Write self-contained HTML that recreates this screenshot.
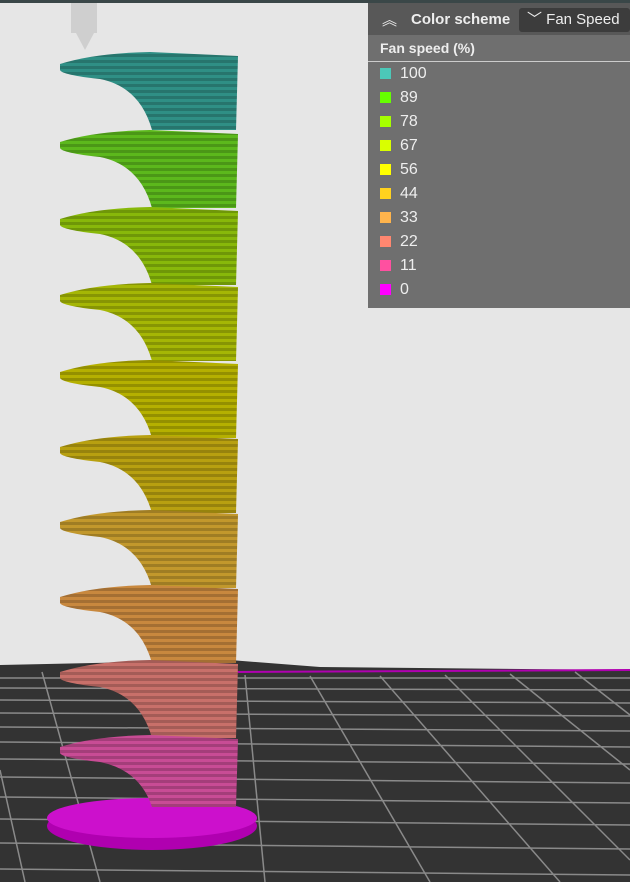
<!DOCTYPE html>
<html><head><style>
body{margin:0;width:630px;height:882px;overflow:hidden;background:#e6e6e6;font-family:"Liberation Sans",sans-serif}
#p{position:absolute;left:368px;top:3px;width:262px;height:305px;background:#6f6f6f;color:#eee}
.h{height:32px;background:#585858;position:relative}
.it{position:absolute;left:12px;font-size:16px;color:#eee}
.sw{display:inline-block;width:11px;height:11px;margin-right:9px;vertical-align:-1px}
</style></head><body>
<svg width="630" height="882" style="position:absolute;left:0;top:0">
<defs>
<pattern id="st" width="4" height="6" patternUnits="userSpaceOnUse"><rect width="4" height="3" fill="rgba(0,0,0,0.18)"/></pattern>
</defs>
<rect x="0" y="0" width="630" height="3" fill="#3a4748"/>
<path d="M0,665 L230,660 L320,667 L630,670 L630,882 L0,882Z" fill="#333"/>
<line x1="230" y1="672" x2="630" y2="670" stroke="#b000b0" stroke-width="2"/>
<g stroke="#8a8a8a" stroke-width="1.5" fill="none">
<line x1="0" y1="678" x2="630" y2="678"/><line x1="0" y1="688" x2="630" y2="690"/>
<line x1="0" y1="700" x2="630" y2="703"/><line x1="0" y1="713" x2="630" y2="716"/>
<line x1="0" y1="727" x2="630" y2="731"/><line x1="0" y1="742" x2="630" y2="747"/>
<line x1="0" y1="759" x2="630" y2="764"/><line x1="0" y1="777" x2="630" y2="783"/>
<line x1="0" y1="797" x2="630" y2="803"/><line x1="0" y1="819" x2="630" y2="825"/>
<line x1="0" y1="843" x2="630" y2="849"/><line x1="0" y1="869" x2="630" y2="875"/>
<line x1="42" y1="672" x2="100" y2="882"/><line x1="0" y1="770" x2="25" y2="882"/>
<line x1="245" y1="675" x2="265" y2="882"/><line x1="310" y1="676" x2="430" y2="882"/>
<line x1="380" y1="676" x2="560" y2="882"/><line x1="445" y1="675" x2="630" y2="860"/>
<line x1="510" y1="674" x2="630" y2="770"/><line x1="575" y1="672" x2="630" y2="715"/>
</g>
<g fill="#cfcfcf"><rect x="71" y="3" width="26" height="30"/><polygon points="76,33 94,33 85,50"/></g>
<ellipse cx="152" cy="826" rx="105" ry="24" fill="#b000b0"/>
<ellipse cx="152" cy="818" rx="105" ry="20" fill="#cc10cc"/>
<g id="tower"></g>
</svg>
<script>
var cols=["#2f8f85","#5cb81c","#88b80a","#a5b605","#b5b000","#b8a010","#c2982c","#c8883e","#c8706a","#c84c95"];
var tops=[52,130,207,283,360,435,510,585,660,735];
var g=document.getElementById("tower"),s="";
for(var i=0;i<10;i++){var y=tops[i],h=(i==9?72:78),c=cols[i];
var d="M60,"+(y+12)+" Q95,"+(y+1)+" 150,"+y+" L238,"+(y+4)+" L236,"+(y+h)+" L152,"+(y+h)+" Q140,"+(y+35)+" 100,"+(y+27)+" Q62,"+(y+23)+" 60,"+(y+18)+"Z";
s+='<path d="'+d+'" fill="'+c+'"/><path d="'+d+'" fill="url(#st)"/>';}
g.innerHTML=s;
</script>
<div id="p">
<div class="h"><span style="position:absolute;left:14px;top:6px;font-size:15px">︽</span>
<b style="position:absolute;left:43px;top:8px;font-size:15px">Color scheme</b>
<div style="position:absolute;left:151px;top:5px;width:111px;height:24px;background:#3c3c3c;border-radius:3px;font-size:15px;line-height:24px;padding-left:8px;box-sizing:border-box">﹀ Fan Speed</div></div>
<b style="position:absolute;left:12px;top:37px;font-size:14px">Fan speed (%)</b>
<div style="position:absolute;left:0;top:58px;width:262px;height:1px;background:#ccc"></div>
<div class="it" style="top:62px"><span class="sw" style="background:#4cc8b8"></span>100</div>
<div class="it" style="top:86px"><span class="sw" style="background:#66ff00"></span>89</div>
<div class="it" style="top:110px"><span class="sw" style="background:#a6ff00"></span>78</div>
<div class="it" style="top:134px"><span class="sw" style="background:#d9ff00"></span>67</div>
<div class="it" style="top:158px"><span class="sw" style="background:#ffff00"></span>56</div>
<div class="it" style="top:182px"><span class="sw" style="background:#ffd21e"></span>44</div>
<div class="it" style="top:206px"><span class="sw" style="background:#ffb44c"></span>33</div>
<div class="it" style="top:230px"><span class="sw" style="background:#ff8770"></span>22</div>
<div class="it" style="top:254px"><span class="sw" style="background:#ff50a0"></span>11</div>
<div class="it" style="top:278px"><span class="sw" style="background:#ff00ff"></span>0</div>
</div>
</body></html>
